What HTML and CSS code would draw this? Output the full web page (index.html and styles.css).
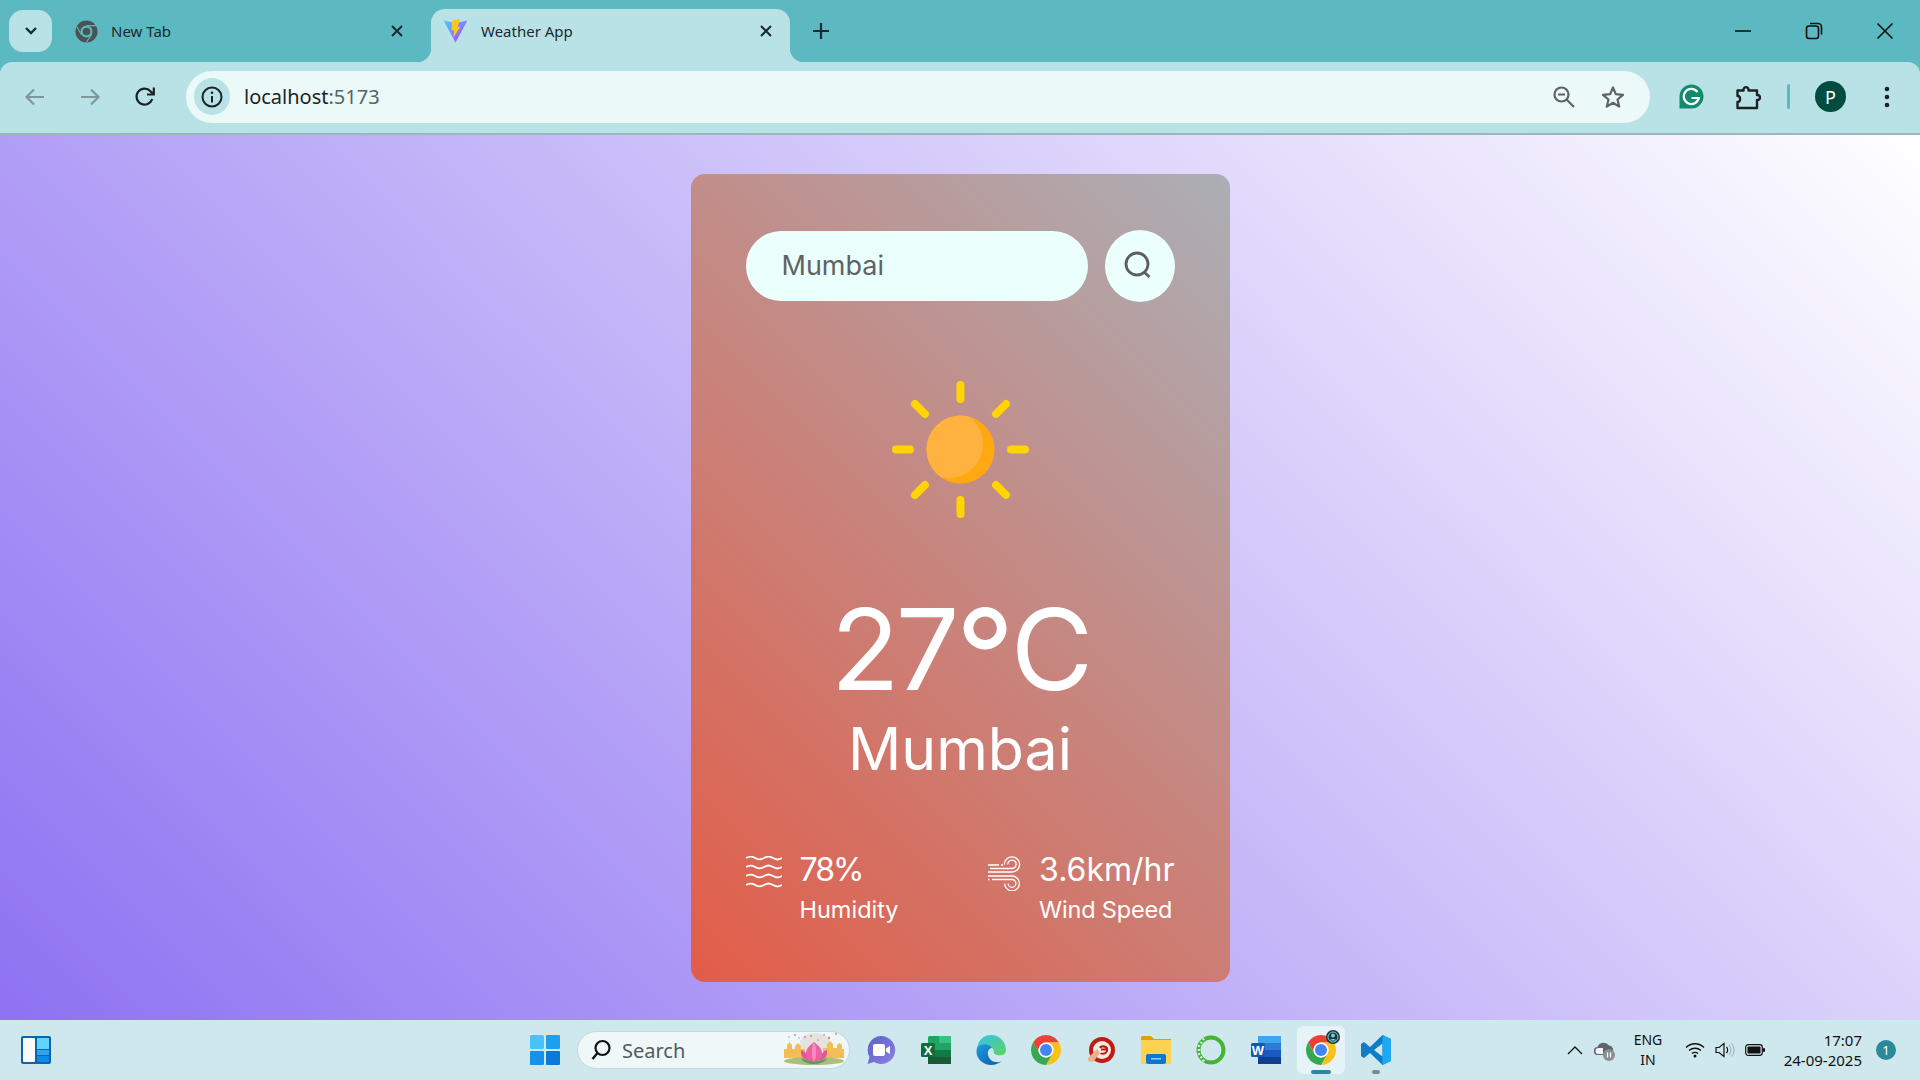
FILE: index.html
```html
<!DOCTYPE html>
<html lang="en">
<head>
<meta charset="utf-8">
<title>Weather App</title>
<link rel="stylesheet" href="styles.css">
</head>
<body>
<svg class="defs" aria-hidden="true">
  <defs>
    <symbol id="chrome" viewBox="4 4 40 40">
      <path fill="#ea4335" d="M6.68 14A20 20 0 0 1 41.32 14L24 14A10 10 0 0 0 15.34 29Z"/>
      <path fill="#fbc116" d="M41.32 14A20 20 0 0 1 24 44L32.66 29A10 10 0 0 0 24 14Z"/>
      <path fill="#34a853" d="M24 44A20 20 0 0 1 6.68 14L15.34 29A10 10 0 0 0 32.66 29Z"/>
      <circle cx="24" cy="24" r="10" fill="#fff"/>
      <circle cx="24" cy="24" r="8" fill="#4285f4"/>
    </symbol>
    <symbol id="close" viewBox="0 0 14 14">
      <path d="M2 2L12 12M12 2L2 12" fill="none" stroke="#1d2a2e" stroke-width="2"/>
    </symbol>
    <linearGradient id="viteA" x1="0" y1="0" x2="1" y2="1"><stop offset="0" stop-color="#41d1ff"/><stop offset="1" stop-color="#bd34fe"/></linearGradient>
    <linearGradient id="edgeA" x1="0" y1="0" x2="1" y2="1"><stop offset="0" stop-color="#35c1f1"/><stop offset="1" stop-color="#5fd45a"/></linearGradient>
    <linearGradient id="edgeB" x1="0" y1="0" x2="1" y2="1"><stop offset="0" stop-color="#1b9de2"/><stop offset="1" stop-color="#0c59a4"/></linearGradient>
    <linearGradient id="meet" x1="0" y1="0" x2="1" y2="1"><stop offset="0" stop-color="#5a62c9"/><stop offset="1" stop-color="#8f7fe0"/></linearGradient>
  </defs>
</svg>

<header class="tabstrip">
  <button class="tab-menu" type="button">
    <svg width="14" height="10" viewBox="0 0 14 10"><path d="M2 2l5 5 5-5" fill="none" stroke="#1d2a2e" stroke-width="2.4"/></svg>
  </button>
  <div class="tab">
    <svg class="tab-icon" width="23" height="23" viewBox="0 0 24 24">
      <circle cx="12" cy="12" r="11.5" fill="#4a5256"/>
      <circle cx="12" cy="12" r="6.2" fill="#5cb8c1"/>
      <circle cx="12" cy="12" r="4" fill="#4a5256"/>
      <path d="M12 5.8H23M6.6 15.1L1.5 6.5M17.4 15.1L11.5 23.5" stroke="#5cb8c1" stroke-width="1.2" fill="none"/>
    </svg>
    <span class="tab-title">New Tab</span>
    <svg class="tab-close" width="14" height="14"><use href="#close"/></svg>
  </div>
  <div class="tab tab-active">
    <svg class="tab-icon vite" width="25" height="24" viewBox="0 0 25 24">
      <path d="M0.6 1.5L12.5 4 24.4 1.5 12.5 23.6Z" fill="url(#viteA)"/>
      <path d="M17 0L9 1.5 8.4 11.6 11 11 10.3 18.4 17.6 7.6 14.6 8.2Z" fill="#ffc61f"/>
    </svg>
    <span class="tab-title">Weather App</span>
    <svg class="tab-close" width="14" height="14"><use href="#close"/></svg>
  </div>
  <svg class="new-tab" width="18" height="18" viewBox="0 0 18 18"><path d="M9 1V17M1 9H17" stroke="#1d2a2e" stroke-width="2.2"/></svg>
  <div class="window-controls">
    <svg width="18" height="18" viewBox="0 0 18 18"><path d="M1 9H17" stroke="#111" stroke-width="1.6"/></svg>
    <svg width="18" height="18" viewBox="0 0 18 18"><rect x="1.5" y="4" width="12" height="12.5" rx="2.5" fill="none" stroke="#111" stroke-width="1.6"/><path d="M5 1.5H13A3.5 3.5 0 0 1 16.5 5V12.5" fill="none" stroke="#111" stroke-width="1.6"/></svg>
    <svg width="18" height="18" viewBox="0 0 18 18"><path d="M1.5 1.5L16.5 16.5M16.5 1.5L1.5 16.5" stroke="#111" stroke-width="1.6"/></svg>
  </div>
</header>

<nav class="toolbar">
  <div class="nav-buttons">
    <svg width="22" height="20" viewBox="0 0 22 20"><path d="M20 10H3M10 2.5L2.5 10 10 17.5" fill="none" stroke="#7f979b" stroke-width="2.2"/></svg>
    <svg width="22" height="20" viewBox="0 0 22 20"><path d="M2 10H19M12 2.5L19.5 10 12 17.5" fill="none" stroke="#7f979b" stroke-width="2.2"/></svg>
    <svg width="22" height="22" viewBox="0 0 22 22"><path d="M18.2 13A8 8 0 1 1 16.5 5.2L19 7.6" fill="none" stroke="#1d2226" stroke-width="2.2"/><path d="M19.8 1.5V8.5H13" fill="none" stroke="#1d2226" stroke-width="2.2"/></svg>
  </div>
  <div class="omnibox">
    <span class="site-info">
      <svg width="22" height="22" viewBox="0 0 22 22"><circle cx="11" cy="11" r="9.5" fill="none" stroke="#1d2226" stroke-width="2"/><path d="M11 10V16.5" stroke="#1d2226" stroke-width="2"/><circle cx="11" cy="6.8" r="1.3" fill="#1d2226"/></svg>
    </span>
    <span class="url">localhost<span class="url-port">:5173</span></span>
    <svg class="omni-zoom" width="24" height="24" viewBox="0 0 24 24"><circle cx="9.5" cy="9.5" r="7" fill="none" stroke="#5f6368" stroke-width="2.2"/><path d="M6 9.5H13M14.5 14.5L22 22" fill="none" stroke="#5f6368" stroke-width="2.2"/></svg>
    <svg class="omni-star" width="24" height="24" viewBox="0 0 24 24"><path d="M12 2.5L14.8 9.2 22 9.8 16.5 14.5 18.2 21.6 12 17.8 5.8 21.6 7.5 14.5 2 9.8 9.2 9.2Z" fill="none" stroke="#5f6368" stroke-width="2.2" stroke-linejoin="round"/></svg>
  </div>
  <div class="extensions">
    <svg class="ext-g" width="25" height="25" viewBox="0 0 25 25"><path d="M12.5 0.5A12 12 0 1 1 12.5 24.5H0.5V12.5A12 12 0 0 1 12.5 0.5Z" fill="#128a6c"/><path d="M18.5 8A7.6 7.6 0 1 0 19.8 14H12.5" fill="none" stroke="#fff" stroke-width="2.2"/></svg>
    <svg class="ext-puzzle" width="26" height="26" viewBox="0 0 26 26"><path d="M2.5 6.5H8.5C8 2 14 2 13.5 6.5H22V11C26 10.5 26 16.5 22 16V24H2.5V18C6 18.5 6 11.5 2.5 12Z" fill="none" stroke="#1d2226" stroke-width="2.4" stroke-linejoin="round"/></svg>
    <span class="ext-divider"></span>
    <span class="avatar">P</span>
    <svg class="ext-dots" width="6" height="22" viewBox="0 0 6 22"><circle cx="3" cy="3" r="2.3" fill="#1d2226"/><circle cx="3" cy="11" r="2.3" fill="#1d2226"/><circle cx="3" cy="19" r="2.3" fill="#1d2226"/></svg>
  </div>
</nav>

<main class="page">
  <section class="card">
    <form class="search">
      <input class="search-input" type="text" value="Mumbai" aria-label="City">
      <button class="search-button" type="button" aria-label="Search">
        <svg width="28" height="28" viewBox="0 0 28 28"><circle cx="13" cy="13" r="11" fill="none" stroke="#5e5e5e" stroke-width="2.8"/><path d="M20 21L25.5 26" stroke="#5e5e5e" stroke-width="2.8"/></svg>
      </button>
    </form>
    <svg class="sun" width="137" height="137" viewBox="0 0 137 137">
      <defs><clipPath id="sunClip"><circle cx="68.5" cy="68.5" r="34"/></clipPath></defs>
      <circle cx="68.5" cy="68.5" r="34" fill="#ffa912"/>
      <circle cx="57" cy="63" r="34" fill="#ffb23f" clip-path="url(#sunClip)"/>
      <g stroke="#ffd400" stroke-width="8" stroke-linecap="round">
        <path d="M68.5 4V18M68.5 119V133M4 68.5H18M119 68.5H133"/>
        <path d="M23 23L33 33M114 23L104 33M23 114L33 104M114 114L104 104"/>
      </g>
    </svg>
    <p class="temp">27<span class="deg">°</span>C</p>
    <p class="city">Mumbai</p>
    <div class="stats">
      <div class="stat">
        <svg class="stat-icon" width="36" height="32" viewBox="0 0 36 32">
          <g fill="none" stroke="#fff" stroke-width="1.8">
            <path d="M0 2C4 0 6 0 9 2S14 4 18 2 23 0 27 2 32 4 36 2"/>
            <path d="M0 11C4 9 6 9 9 11S14 13 18 11 23 9 27 11 32 13 36 11"/>
            <path d="M0 20C4 18 6 18 9 20S14 22 18 20 23 18 27 20 32 22 36 20"/>
            <path d="M0 29C4 27 6 27 9 29S14 31 18 29 23 27 27 29 32 31 36 29"/>
          </g>
        </svg>
        <div class="stat-text">
          <p class="stat-value stat-value-tight">78%</p>
          <p class="stat-label">Humidity</p>
        </div>
      </div>
      <div class="stat">
        <svg class="stat-icon" width="34" height="35" viewBox="0 0 34 35">
          <g fill="none" stroke="#fff" stroke-width="1.3">
            <path d="M1 9H12M14 9H16"/>
            <path d="M1 16H25A7.6 7.6 0 1 0 17.4 8.4"/>
            <path d="M3 12.5H25A4.2 4.2 0 1 0 20.8 8.4"/>
            <path d="M1 20H25A7.4 7.4 0 1 1 17.6 27.4"/>
            <path d="M5 23.5H25A3.9 3.9 0 1 1 21.1 27.4"/>
            <path d="M1 23.5H2.5"/>
          </g>
        </svg>
        <div class="stat-text">
          <p class="stat-value">3.6km/hr</p>
          <p class="stat-label stat-label-tight">Wind Speed</p>
        </div>
      </div>
    </div>
  </section>
</main>

<footer class="taskbar">
  <svg class="widgets" width="30" height="28" viewBox="0 0 30 28"><rect width="30" height="28" rx="2" fill="#0f62ae"/><rect x="2" y="2" width="12" height="24" rx="1" fill="#fafafa"/><rect x="16" y="2" width="12" height="11" fill="#62d4fb"/><rect x="16" y="14" width="12" height="5" fill="#2aa5ee"/><rect x="16" y="20" width="12" height="6" fill="#0d8be4"/></svg>
  <div class="task-center">
    <span class="task-item">
      <svg width="30" height="30" viewBox="0 0 30 30"><rect width="14" height="14" rx="1.5" fill="#45c4f9"/><rect x="16" width="14" height="14" rx="1" fill="#1da1ef"/><rect y="16" width="14" height="14" rx="1" fill="#1792e6"/><rect x="16" y="16" width="14" height="14" rx="1" fill="#0b79d6"/></svg>
    </span>
    <div class="task-search">
      <svg width="22" height="22" viewBox="0 0 22 22"><circle cx="12.5" cy="9" r="7" fill="none" stroke="#111" stroke-width="2.2"/><path d="M7.5 14L2.5 20" stroke="#111" stroke-width="2.4"/></svg>
      <span class="task-search-text">Search</span>
      <svg class="lotus" width="62" height="36" viewBox="0 0 62 36">
        <ellipse cx="32" cy="11" rx="15" ry="10" fill="#e5e3df"/>
        <path d="M1 26V17H4V13L6.5 10 9 13V17H12V14L15 11 18 14V17H22V26Z" fill="#f3bf54"/>
        <path d="M40 26V16H44V12L47 9 50 12V16H54V13L56.5 11 59 13V17H61V26Z" fill="#f3bf54"/>
        <g>
          <circle cx="6" cy="5" r="1" fill="#9bd3c9"/><circle cx="12" cy="3" r="1" fill="#ee7d7d"/><circle cx="16" cy="6" r="1" fill="#9bd3c9"/>
          <circle cx="22" cy="5" r="1.2" fill="#ef8fb5"/><circle cx="28" cy="4" r="1" fill="#e08a62"/><circle cx="35" cy="8" r="1" fill="#ef8fb5"/>
          <circle cx="41" cy="3" r="1" fill="#7fc9b5"/><circle cx="46" cy="6" r="1.2" fill="#ee7d7d"/><circle cx="53" cy="2" r="1" fill="#e08a62"/>
        </g>
        <ellipse cx="31" cy="29" rx="30" ry="4" fill="#a8bf80"/>
        <path d="M18 26C24 30 38 30 44 26 41 34 21 34 18 26Z" fill="#5f9a5c"/>
        <path d="M18 18C22 19 25 23 27 28 22 29 17 25 18 18Z" fill="#e2559c"/>
        <path d="M44 18C40 19 37 23 35 28 40 29 45 25 44 18Z" fill="#e2559c"/>
        <path d="M31 10C36 14 40 17 39 25 37 31 25 31 23 25 22 17 26 14 31 10Z" fill="#ec5fa4"/>
        <path d="M31 10C34 15 34 25 31 30 28 25 28 15 31 10Z" fill="#f58bc0"/>
      </svg>
    </div>
    <span class="task-item">
      <svg width="30" height="30" viewBox="0 0 30 30"><path d="M15 1A14 14 0 1 1 8 27L1.5 29 3.5 22A14 14 0 0 1 15 1Z" fill="url(#meet)"/><rect x="7" y="9" width="12" height="12" rx="2" fill="#fff"/><path d="M20 13.5L24 11V19L20 16.5Z" fill="#fff"/></svg>
    </span>
    <span class="task-item">
      <svg width="30" height="30" viewBox="0 0 30 30"><rect x="7" y="1" width="23" height="28" rx="1.5" fill="#21a366"/><rect x="18" y="1" width="12" height="7" fill="#33c481"/><rect x="7" y="15" width="23" height="7" fill="#107c41"/><rect x="7" y="22" width="23" height="7" fill="#185c37"/><rect y="8" width="14" height="14" rx="1.5" fill="#0f6d3b"/><text class="tile-letter" x="7" y="19.5">X</text></svg>
    </span>
    <span class="task-item">
      <svg width="30" height="30" viewBox="0 0 30 30"><path d="M15 0A15 15 0 0 1 30 15C30 20 25 21 21 20 16 19 19 15 16 13 11 10 3 13 1 17 0 7 7 0 15 0Z" fill="url(#edgeA)"/><path d="M1 13C4 8 13 8 16 13 12 13 10 19 14 24 17 28 23 28 26 26 22 30 12 32 6 27 0 22 0 17 1 13Z" fill="url(#edgeB)"/></svg>
    </span>
    <span class="task-item">
      <svg width="30" height="30"><use href="#chrome"/></svg>
    </span>
    <span class="task-item">
      <svg width="30" height="30" viewBox="0 0 30 30"><circle cx="16" cy="15" r="13" fill="#c01d10"/><circle cx="16" cy="15" r="9" fill="#f3ece6"/><path d="M13 12C15 9.5 21 9.5 22 13 23 18 19 21 14 19L15 17.5C18 18.5 20 17 20 15.5H15V13.5H19.5C18.5 12 15.5 12 14.5 13.5Z" fill="#c01d10"/><path d="M2 23L11 14 14 18 8 26C4 28 1 26 2 23Z" fill="#e9b28b"/></svg>
    </span>
    <span class="task-item">
      <svg width="30" height="30" viewBox="0 0 30 30"><path d="M0 2.5A1.5 1.5 0 0 1 1.5 1H10L13 4H30V12H0Z" fill="#dca106"/><rect y="5" width="30" height="24" fill="#ffd152"/><rect x="5" y="19" width="20" height="10" rx="2" fill="#0a78d1"/><rect x="10" y="23" width="10" height="1.5" fill="#8fd0f5"/></svg>
    </span>
    <span class="task-item">
      <svg width="30" height="30" viewBox="0 0 30 30"><circle cx="15" cy="15" r="12.5" fill="none" stroke="#44b431" stroke-width="4"/><path d="M8 3.5L3 11V19L8 26.5" fill="none" stroke="#cfe8ee" stroke-width="2.5" stroke-dasharray="2 2"/></svg>
    </span>
    <span class="task-item">
      <svg width="30" height="30" viewBox="0 0 30 30"><rect x="7" y="1" width="23" height="28" rx="1.5" fill="#2b7cd3"/><rect x="7" y="1" width="23" height="7" fill="#41a5ee"/><rect x="7" y="15" width="23" height="7" fill="#185abd"/><rect x="7" y="22" width="23" height="7" fill="#103f91"/><rect y="8" width="14" height="14" rx="1.5" fill="#1558b5"/><text class="tile-letter" x="7" y="19.5">W</text></svg>
    </span>
    <span class="task-item task-active">
      <span class="task-chrome">
        <svg width="30" height="30"><use href="#chrome"/></svg>
        <svg class="task-badge" width="14" height="14" viewBox="0 0 14 14"><circle cx="7" cy="7" r="7" fill="#21363c"/><circle cx="7" cy="7" r="5" fill="none" stroke="#6fd0da" stroke-width="1"/><circle cx="7" cy="5.5" r="2" fill="#6fd0da"/><path d="M3.5 10.5C5 8.5 9 8.5 10.5 10.5Z" fill="#6fd0da"/></svg>
      </span>
      <span class="task-indicator"></span>
    </span>
    <span class="task-item task-open">
      <svg width="30" height="32" viewBox="0 0 30 32"><path d="M21.5 1L30 5V27L21.5 31 9 19 3 24 0 22V10L3 8 9 13ZM21.5 9.5L13 16 21.5 22.5Z" fill="#0e7cc6"/><path d="M21.5 1L30 5V27L21.5 31Z" fill="#1fa9f1"/></svg>
      <span class="task-indicator task-indicator-small"></span>
    </span>
  </div>
  <div class="tray">
    <svg class="tray-chevron" width="16" height="9" viewBox="0 0 16 9"><path d="M1 8L8 1 15 8" fill="none" stroke="#111" stroke-width="1.3"/></svg>
    <svg class="tray-cloud" width="21" height="21" viewBox="0 0 21 21"><path d="M4 15A4 4 0 0 1 3.5 7 6.5 6.5 0 0 1 15 5.5 4.5 4.5 0 0 1 18 13V15Z" fill="#5f666a"/><path d="M4.5 14A3 3 0 0 1 4.5 8H9V14Z" fill="#eef6f8"/><circle cx="15" cy="15" r="6" fill="#8a8f92"/><path d="M13.5 12.5V17.5M16.5 12.5V17.5" stroke="#fff" stroke-width="1.3"/></svg>
    <div class="tray-lang"><span>ENG</span><span>IN</span></div>
    <svg class="tray-wifi" width="20" height="16" viewBox="0 0 20 16"><g fill="none" stroke="#111" stroke-width="1.3"><path d="M1 5.5C6 0.5 14 0.5 19 5.5"/><path d="M4 8.5C7.5 5.5 12.5 5.5 16 8.5"/><path d="M7 11.5C8.5 10 11.5 10 13 11.5"/></g><circle cx="10" cy="14" r="1.5" fill="#111"/></svg>
    <svg class="tray-sound" width="20" height="16" viewBox="0 0 20 16"><path d="M1 5.5H4L9 1.5V14.5L4 10.5H1Z" fill="none" stroke="#111" stroke-width="1.2"/><path d="M11.5 5C13 6.5 13 9.5 11.5 11" fill="none" stroke="#111" stroke-width="1.2"/><path d="M14 3C16.5 6 16.5 10 14 13M16.5 1.5C20 5.5 20 10.5 16.5 14.5" fill="none" stroke="#9aa6a9" stroke-width="1"/></svg>
    <svg class="tray-battery" width="20" height="12" viewBox="0 0 20 12"><rect x="0.7" y="0.7" width="16.6" height="10.6" rx="2.5" fill="none" stroke="#111" stroke-width="1.2"/><rect x="2.5" y="2.5" width="13" height="7" rx="1" fill="#111"/><rect x="18" y="4" width="2" height="4" rx="1" fill="#111"/></svg>
    <div class="tray-clock"><span>17:07</span><span>24-09-2025</span></div>
    <span class="tray-badge">1</span>
  </div>
</footer>
</body>
</html>
```

FILE: styles.css
```css
* { box-sizing: border-box; }
html, body { margin: 0; height: 100%; }
body {
  display: flex;
  flex-direction: column;
  height: 100vh;
  overflow: hidden;
  font-family: "Noto Sans", "Open Sans", sans-serif;
  background: #5cb8c1;
}
p { margin: 0; }
svg { display: block; flex: none; }
.defs { position: absolute; width: 0; height: 0; }

/* Tab strip */
.tabstrip {
  height: 62px;
  flex: none;
  display: flex;
  align-items: flex-end;
  padding-left: 9px;
  background: #5cb8c1;
}
.tab-menu {
  width: 43px;
  height: 42px;
  margin-bottom: 10px;
  border: 0;
  padding: 0;
  border-radius: 14px;
  background: #b8e2e6;
  display: flex;
  align-items: center;
  justify-content: center;
}
.tab {
  width: 379px;
  height: 53px;
  display: flex;
  align-items: center;
  padding: 0 27px 9px 23px;
  color: #1d2a2e;
}
.tab-title { margin-left: 13px; font-size: 15px; flex: 1; }
.tab-active {
  position: relative;
  width: 359px;
  padding: 0 17px 9px 12px;
  background: #b8e2e6;
  border-radius: 14px 14px 0 0;
}
.tab-active::before,
.tab-active::after {
  content: "";
  position: absolute;
  bottom: 0;
  width: 14px;
  height: 14px;
}
.tab-active::before { left: -14px; background: radial-gradient(circle at 0 0, transparent 14px, #b8e2e6 14.5px); }
.tab-active::after { right: -14px; background: radial-gradient(circle at 100% 0, transparent 14px, #b8e2e6 14.5px); }
.new-tab { margin: 0 0 22px 22px; }
.window-controls {
  margin-left: auto;
  padding-right: 26px;
  height: 62px;
  display: flex;
  align-items: center;
  gap: 53px;
}

/* Toolbar */
.toolbar {
  height: 73px;
  flex: none;
  display: flex;
  align-items: center;
  padding: 0 0 2px 0;
  background: #b8e2e6;
  border-bottom: 2px solid #9ab8bb;
  border-radius: 12px 12px 0 0;
}
.nav-buttons {
  display: flex;
  align-items: center;
  gap: 33px;
  padding-left: 24px;
  width: 186px;
}
.omnibox {
  width: 1464px;
  height: 52px;
  display: flex;
  align-items: center;
  border-radius: 26px;
  background: #ebf9f9;
  padding-left: 8px;
}
.site-info {
  width: 36px;
  height: 37px;
  border-radius: 50%;
  background: #b8e2e6;
  display: flex;
  align-items: center;
  justify-content: center;
}
.url { margin-left: 14px; font-size: 20px; color: #1d2226; flex: 1; }
.url-port { color: #55646a; }
.omni-zoom { margin-right: 25px; }
.omni-star { margin-right: 25px; }
.extensions { display: flex; align-items: center; padding-left: 29px; }
.ext-puzzle { margin-left: 31px; }
.ext-divider { width: 3px; height: 25px; margin-left: 26px; border-radius: 2px; background: #5cb8c1; }
.avatar {
  width: 31px;
  height: 31px;
  margin-left: 25px;
  border-radius: 50%;
  background: #004d40;
  color: #fff;
  font-size: 18px;
  display: flex;
  align-items: center;
  justify-content: center;
}
.ext-dots { margin-left: 38px; }

/* Page */
.page {
  flex: 1;
  min-height: 0;
  display: flex;
  align-items: center;
  justify-content: center;
  background: linear-gradient(45deg, #8e72f2, #ffffff);
}
.card {
  width: 539px;
  height: 808px;
  margin-top: 1px;
  padding: 56px 55px 0;
  display: flex;
  flex-direction: column;
  align-items: center;
  border-radius: 14px;
  background: linear-gradient(45deg, #e35c47, #abafb6);
  color: #fff;
  font-family: Inter, "Noto Sans", sans-serif;
}
.search { width: 100%; display: flex; align-items: center; gap: 17px; }
.search-input {
  width: 342px;
  height: 70px;
  padding: 0 36px 2px;
  border: 0;
  outline: 0;
  border-radius: 35px;
  background: #ebfffc;
  color: #626262;
  font-family: inherit;
  font-size: 27px;
}
.search-button {
  width: 70px;
  height: 72px;
  padding: 0 4px 2px 0;
  border: 0;
  border-radius: 50%;
  background: #ebfffc;
  display: flex;
  align-items: center;
  justify-content: center;
}
.sun { margin-top: 79px; }
.temp { margin-top: 71px; font-size: 113px; line-height: 120px; letter-spacing: -4px; }
.deg { font-size: 1.15em; line-height: 0; vertical-align: -12px; }
.city { margin-top: 5px; font-size: 59px; line-height: 70px; }
.stats {
  width: 100%;
  margin-top: 66px;
  display: flex;
  justify-content: space-between;
}
.stat { display: flex; align-items: flex-start; gap: 18px; }
.stat-icon { margin-top: 6px; }
.stat-value { font-size: 32px; line-height: 40px; }
.stat-value-tight { letter-spacing: -2px; }
.stat-label { margin-top: 2px; font-size: 23.5px; line-height: 36px; }
.stat-label-tight { letter-spacing: -0.2px; }

/* Taskbar */
.taskbar {
  height: 60px;
  flex: none;
  display: flex;
  align-items: center;
  padding-left: 21px;
  background: #cfe8ee;
}
.task-center { display: flex; align-items: center; margin-left: 470px; gap: 7px; }
.task-item {
  position: relative;
  width: 48px;
  height: 48px;
  display: flex;
  align-items: center;
  justify-content: center;
}
.task-search {
  width: 273px;
  height: 38px;
  margin: 0 0 0 1px;
  display: flex;
  align-items: center;
  padding: 0 4px 0 12px;
  border-radius: 19px;
  background: #eff7f9;
  border: 1px solid #c4d8de;
}
.task-search-text { margin-left: 10px; font-size: 20px; color: #4f5a5e; flex: 1; }
.tile-letter { fill: #fff; font: 700 13px "Liberation Sans", sans-serif; text-anchor: middle; }
.task-active { background: #e7f4f7; border-radius: 6px; }
.task-chrome { position: relative; }
.task-badge { position: absolute; top: -5px; right: -4px; }
.task-indicator {
  position: absolute;
  bottom: 0;
  left: 14px;
  width: 20px;
  height: 4px;
  border-radius: 2px;
  background: #2b8a9a;
}
.task-indicator-small { left: 20px; width: 8px; background: #7f8a8e; }

.tray {
  margin-left: auto;
  padding-right: 24px;
  display: flex;
  align-items: center;
  color: #111;
}
.tray-cloud { margin-left: 11px; }
.tray-lang {
  width: 34px;
  margin-left: 16px;
  display: flex;
  flex-direction: column;
  align-items: center;
  font-size: 14px;
  line-height: 20px;
}
.tray-wifi { margin-left: 20px; }
.tray-sound { margin-left: 10px; }
.tray-battery { margin-left: 10px; }
.tray-clock {
  width: 97px;
  display: flex;
  flex-direction: column;
  align-items: flex-end;
  font-size: 15px;
  line-height: 20px;
}
.tray-badge {
  width: 20px;
  height: 20px;
  margin-left: 14px;
  border-radius: 50%;
  background: #2b8a9a;
  color: #fff;
  font-size: 13px;
  display: flex;
  align-items: center;
  justify-content: center;
}
```
